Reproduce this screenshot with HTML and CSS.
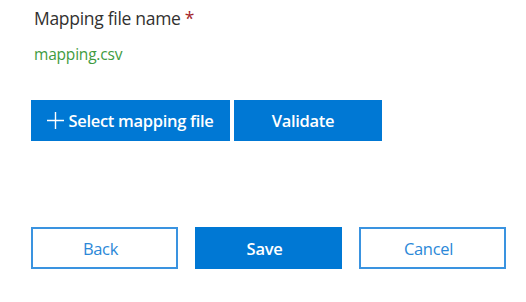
FILE: index.html
```html
<!DOCTYPE html>
<html lang="en">
<head>
  <meta charset="UTF-8" />
  <title>Mapping file</title>
  <link rel="stylesheet" href="styles.css">
</head>
<body>
  <div class="panel">
    <div class="field">
      <label class="label">Mapping file name <span class="req">*</span></label>
      <div class="filename">mapping.csv</div>
    </div>

    <div class="actions">
      <button class="btn primary select">
        <svg class="plus" width="17" height="17" viewBox="0 0 17 17"><path d="M8.5 0v17M0 8.5h17" stroke="#fff" stroke-width="1.4" fill="none"/></svg>
        Select mapping file
      </button>
      <button class="btn primary validate">Validate</button>
    </div>

    <div class="footer">
      <button class="btn outline">Back</button>
      <button class="btn primary">Save</button>
      <button class="btn outline">Cancel</button>
    </div>
  </div>
</body>
</html>
```

FILE: styles.css
```css
body {
  margin: 0;
  background: #fff;
  font-family: "Open Sans", "Noto Sans", sans-serif;
}
.panel {
  padding: 6px 0 0 31px;
}
.label {
  display: block;
  font-size: 17.5px;
  line-height: 24px;
  color: #323130;
  padding-left: 3px;
  letter-spacing: -0.3px;
}
.req {
  color: #a4262c;
}
.filename {
  margin-top: 14px;
  padding-left: 3px;
  font-size: 15.5px;
  line-height: 20px;
  color: #3f9b3f;
  letter-spacing: -0.2px;
}
.actions {
  display: flex;
  gap: 4px;
  margin-top: 36px;
}
.btn {
  font-family: inherit;
  font-size: 16.5px;
  font-weight: 600;
  height: 41px;
  border: 1px solid #0078d4;
  padding: 0;
  display: flex;
  align-items: center;
  justify-content: center;
  letter-spacing: -0.3px;
}
.primary {
  background: #0078d4;
  color: #fff;
}
.select {
  width: 199px;
  gap: 4px;
}
.validate {
  width: 148px;
  padding-right: 10px;
}
.footer {
  display: flex;
  gap: 17px;
  margin-top: 86px;
}
.footer .btn {
  width: 147px;
  height: 42px;
  padding-right: 8px;
}
.outline {
  background: #fff;
  color: #2b88d8;
  border: 2px solid #3a93e0;
  font-weight: 400;
}
```
